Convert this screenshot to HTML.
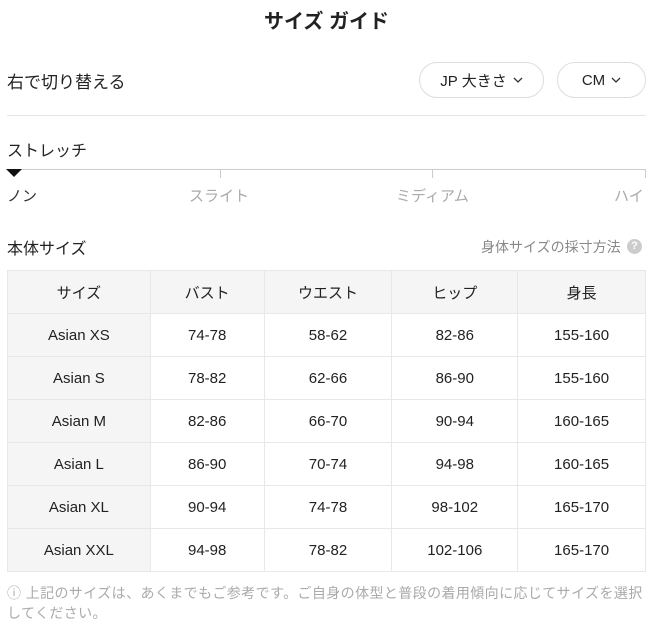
<!DOCTYPE html>
<html><head><meta charset="utf-8"><style>
*{margin:0;padding:0;box-sizing:border-box}
body{width:653px;height:626px;background:#fff;font-family:"Liberation Sans","Noto Sans CJK JP",sans-serif;color:#222;position:relative;overflow:hidden}
.a{position:absolute;white-space:nowrap}
.pill{position:absolute;top:62px;height:36px;border:1px solid #ddd;border-radius:18px;font-size:15px;display:flex;align-items:center;justify-content:center;gap:6px;color:#222}
table{position:absolute;left:7px;top:270px;width:639px;border-collapse:collapse;font-size:15px;text-align:center}
td{height:43px;border:1px solid #e8e8e8;color:#222}
tr:first-child td{background:#f5f5f5}
td:first-child{background:#f5f5f5}
</style></head><body>
<div class="a" style="left:0;width:653px;text-align:center;top:5px;font-size:20px;font-weight:bold">サイズ ガイド</div>
<div class="a" style="left:7px;top:68px;font-size:17px">右で切り替える</div>
<div class="pill" style="left:419px;width:125px">JP 大きさ <svg width="10" height="6" viewBox="0 0 10 6"><path d="M1 1l4 4 4-4" fill="none" stroke="#333" stroke-width="1.3"/></svg></div>
<div class="pill" style="left:557px;width:89px">CM <svg width="10" height="6" viewBox="0 0 10 6"><path d="M1 1l4 4 4-4" fill="none" stroke="#333" stroke-width="1.3"/></svg></div>
<div class="a" style="left:7px;top:115px;width:639px;height:1px;background:#e5e5e5"></div>
<div class="a" style="left:7px;top:137px;font-size:16px">ストレッチ</div>
<div class="a" style="left:7px;top:169px;width:639px;height:1px;background:#ccc"></div>
<div class="a" style="left:220px;top:169px;width:1px;height:9px;background:#ccc"></div>
<div class="a" style="left:432px;top:169px;width:1px;height:9px;background:#ccc"></div>
<div class="a" style="left:645px;top:169px;width:1px;height:9px;background:#ccc"></div>
<svg class="a" style="left:6px;top:169px" width="16" height="8"><path d="M0 0h16L8 8z" fill="#111"/></svg>
<div class="a" style="left:7px;top:185px;font-size:15px;color:#333">ノン</div>
<div class="a" style="left:189px;top:185px;font-size:15px;color:#aaa">スライト</div>
<div class="a" style="left:396px;top:185px;font-size:15px;color:#aaa">ミディアム</div>
<div class="a" style="left:614px;top:185px;font-size:15px;color:#aaa">ハイ</div>
<div class="a" style="left:7px;top:235px;font-size:16px">本体サイズ</div>
<div class="a" style="left:481px;top:237px;font-size:14px;color:#888">身体サイズの採寸方法</div>
<div class="a" style="left:627px;top:239px;width:15px;height:15px;border-radius:50%;background:#ccc;color:#fff;font-size:11px;font-weight:bold;text-align:center;line-height:15px">?</div>
<table>
<colgroup><col style="width:143px"><col style="width:114px"><col style="width:128px"><col style="width:126px"><col style="width:128px"></colgroup>
<tr><td>サイズ</td><td>バスト</td><td>ウエスト</td><td>ヒップ</td><td>身長</td></tr>
<tr><td>Asian XS</td><td>74-78</td><td>58-62</td><td>82-86</td><td>155-160</td></tr>
<tr><td>Asian S</td><td>78-82</td><td>62-66</td><td>86-90</td><td>155-160</td></tr>
<tr><td>Asian M</td><td>82-86</td><td>66-70</td><td>90-94</td><td>160-165</td></tr>
<tr><td>Asian L</td><td>86-90</td><td>70-74</td><td>94-98</td><td>160-165</td></tr>
<tr><td>Asian XL</td><td>90-94</td><td>74-78</td><td>98-102</td><td>165-170</td></tr>
<tr><td>Asian XXL</td><td>94-98</td><td>78-82</td><td>102-106</td><td>165-170</td></tr>
</table>
<div class="a" style="left:7px;top:583px;width:646px;font-size:14px;letter-spacing:0.4px;line-height:20px;color:#aaa;white-space:normal">ⓘ 上記のサイズは、あくまでもご参考です。ご自身の体型と普段の着用傾向に応じてサイズを選択<br>してください。</div>
</body></html>
